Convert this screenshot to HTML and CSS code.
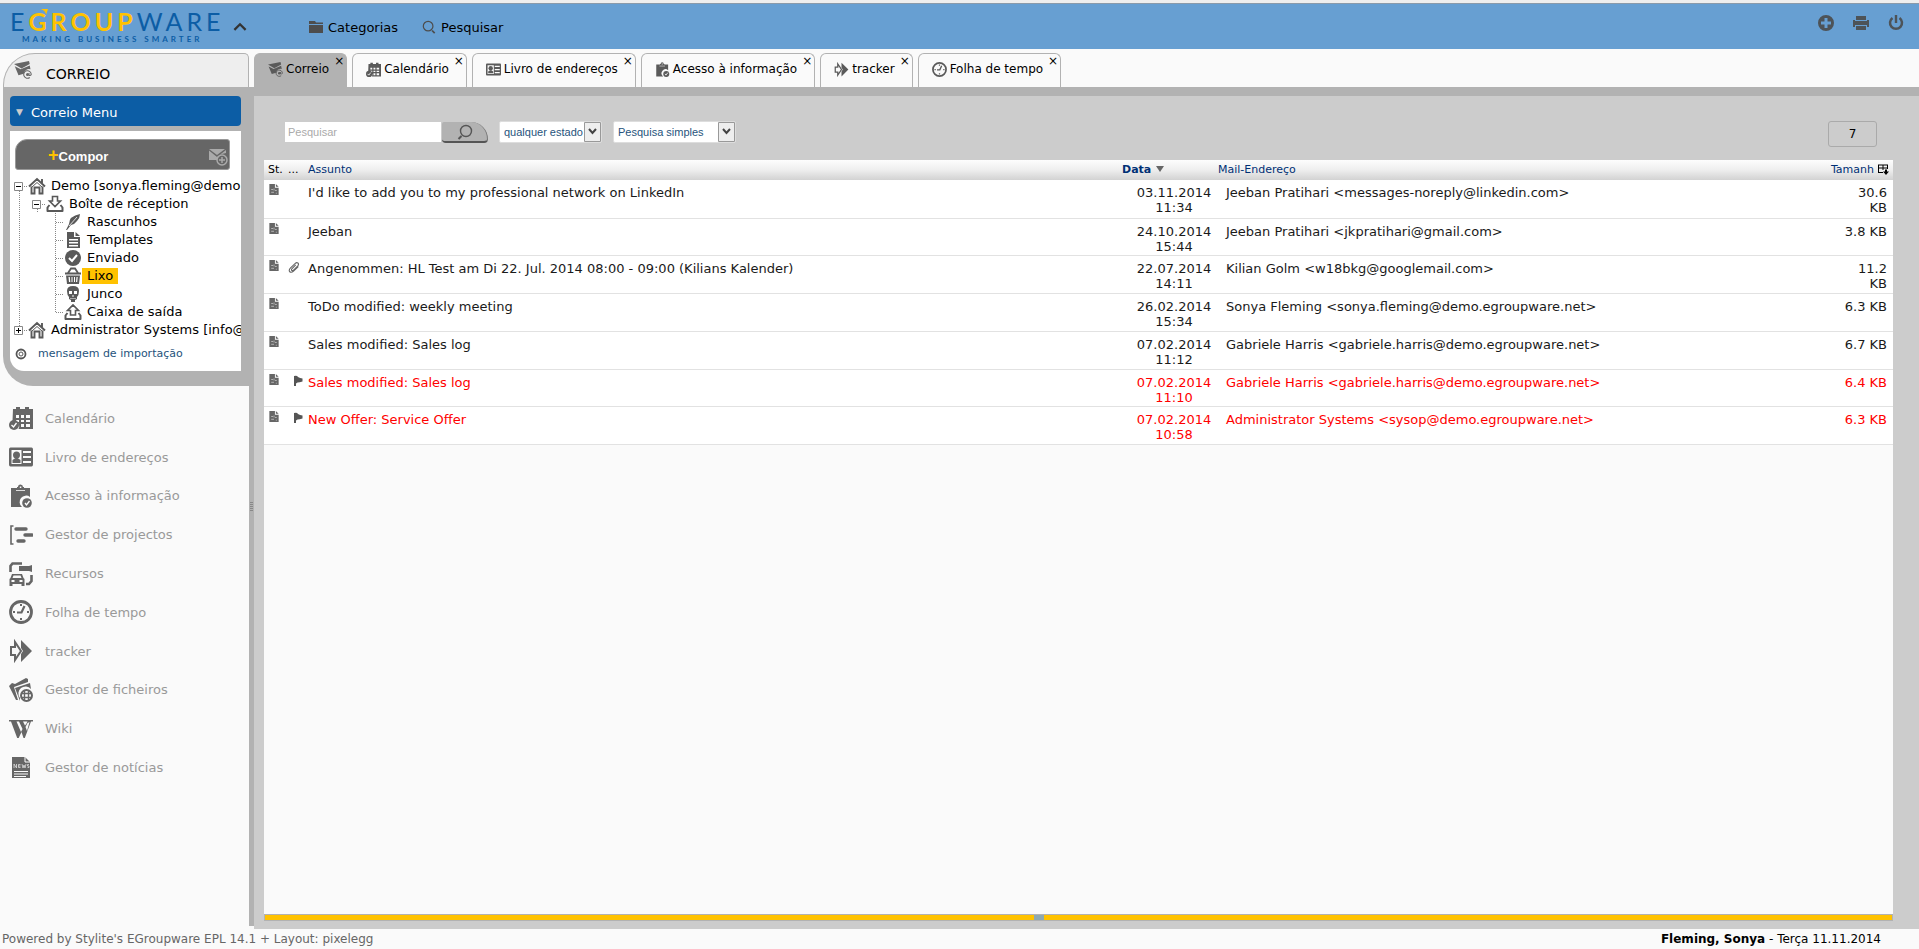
FILE: index.html
```html
<!DOCTYPE html>
<html lang="pt">
<head>
<meta charset="utf-8">
<title>EGroupware - Correio</title>
<link rel="stylesheet" href="styles.css">
</head>
<body>
<svg class="sprite" aria-hidden="true">
  <symbol id="i-mail" viewBox="0 0 24 24"><path d="M0 4 20 0l1 4-11 6zM1 7l8 4 12-5 1 5a7 7 0 0 0-9 6L6 19z"/><circle cx="18" cy="18" r="2"/><path d="M20 16v3q2 1 3-1a5 5 0 1 0-2 4" fill="none" stroke="currentColor" stroke-width="1.4"/></symbol>
  <symbol id="i-calendar" viewBox="0 0 24 24"><path fill-rule="evenodd" d="M4 3h3V1h4v2h5V1h4v2h4v20H9.500a5.500 5.500 0 0 0-6-8zM7 9v3h3V9zm5 0v3h3V9zm5 0v3h4V9zM7 14v2h3v-2zm5 0v2h3v-2zm5 0v2h4v-2zm-5 4v3h3v-3zm5 0v3h4v-3z"/><circle cx="5" cy="19" r="5"/><path d="m2.500 19 2 2 3-4" fill="none" stroke="#fff" stroke-width="1.300"/></symbol>
  <symbol id="i-contacts" viewBox="0 0 24 24"><path fill-rule="evenodd" d="M1.500 2.500h21q1.500 0 1.500 2v15q0 2-1.500 2h-21Q0 21.500 0 19.500v-15q0-2 1.500-2zM2.500 5v14h10V5zM14 6v2h8V6zm0 5v2h8v-2zm0 5v2h8v-2z"/><circle cx="7.500" cy="10" r="3.500"/><path d="M3.500 18v-3l3-2h2l3 2v3z"/></symbol>
  <symbol id="i-clip" viewBox="0 0 24 24"><path fill-rule="evenodd" d="M2 4h6V3h1a2.500 2.500 0 0 1 5 0h1v1h6v9a6 6 0 0 0-8 10H2zM10.800 2.500v1.500h1.500V2.500z"/><path d="M7 6.500h9" stroke="#ddd" stroke-width="1"/><circle cx="18" cy="19" r="4.800"/><path d="m16 19 1.500 2 3-4" fill="none" stroke="#fff" stroke-width="1.300"/></symbol>
  <symbol id="i-projects" viewBox="0 0 24 24"><path d="M4.500 3H2v18h2.500" fill="none" stroke="currentColor" stroke-width="1.600"/><path d="M7 6h10M16 12h7M9 18h6" stroke="currentColor" stroke-width="3.400" stroke-linecap="round"/></symbol>
  <symbol id="i-resources" viewBox="0 0 24 24"><path d="M1.500 10V4l2-2.500H13M17 22h3l2.500-3v-6" fill="none" stroke="currentColor" stroke-width="2.600"/><path fill-rule="evenodd" d="M10 4h10l3-1v7l-3-1H10zM3 12h10l1.500 4 1 1v7h-3v-2h-9v2h-3v-7l1-1zm1.500 1.500L3.500 16h9l-1-2.500zM2.500 18v2h3v-2zm8 0v2h3v-2z"/></symbol>
  <symbol id="i-clock" viewBox="0 0 24 24"><circle cx="12" cy="12" r="10.500" fill="none" stroke="currentColor" stroke-width="2.800"/><path d="m15.500 6-3 6.500H8" fill="none" stroke="currentColor" stroke-width="2.200"/><path d="M11 4h2v2h-2zM11 18h2v2h-2zM4 11h2v2H4zM18 11h2v2h-2z"/></symbol>
  <symbol id="i-tracker" viewBox="0 0 24 24"><path d="M2 8h4V3l6 9-6 9v-5H2z" fill="none" stroke="currentColor" stroke-width="2"/><path d="m12 1 11 11-11 11v-8l2-3-2-3z"/></symbol>
  <symbol id="i-files" viewBox="0 0 24 24"><path d="M0 8l3-3 3 1L17 0l2 1v3L5 9l4 13H7zM6 10l15-5 1 6a7 7 0 0 0-11 9v3z"/><circle cx="17.500" cy="17.500" r="5.500" fill="none" stroke="currentColor" stroke-width="2"/><path d="M15.500 12v11M19.500 12v11M12 15.500h11M12 19.500h11" stroke="currentColor" stroke-width="1.400"/></symbol>
  <symbol id="i-wiki" viewBox="0 0 24 24"><path d="M0 3h9v1.500H7.500L12 15l1.500-3-3.500-7.500H8.500V3H24v1.500h-2L15.800 21h-1.300L12.500 15 9.700 21H8.200L2 4.500H0zm14 1.500 2 4 1.500-2 1-2zm4.500 1.500-2 4 1.500 4L20.500 5z"/></symbol>
  <symbol id="i-news" viewBox="0 0 24 24"><path fill-rule="evenodd" d="M3 1h13l5 5v16H3zm2 14v1h14v-1zm0 2.500v1h14v-1zM5 20v1h12v-1z"/><path d="M16 1v5h5" stroke="#fff" fill="none"/><path d="M5 12V8l2.500 4V8M11.500 8.500H9.500v3h2M9.500 10h2M13 8l1 4 1-3 1 3 1-4M20 8.500h-1.500V10H20v1.500h-1.500" stroke="#ddd" stroke-width=".8" fill="none"/></symbol>
  <symbol id="i-home" viewBox="0 0 18 18"><path d="m1 9.500 8-7.500 8 7.500M3.500 9.500v7h3v-6h5v6h3v-7M14 6V2" fill="none" stroke="currentColor" stroke-width="1.900"/><path d="m4 10 5-4.500 5 4.500" fill="none" stroke="currentColor"/></symbol>
  <symbol id="i-inbox" viewBox="0 0 18 18"><path d="M6.500 1.500h5V6h3L9 11.500 3.500 6h3z" fill="none" stroke="currentColor" stroke-width="1.600"/><path d="M3.500 10 1.500 12.500v3.500h15v-3.500L14.500 10" fill="none" stroke="currentColor" stroke-width="2" stroke-linejoin="round"/></symbol>
  <symbol id="i-outbox" viewBox="0 0 18 18"><path d="M6.500 12h5V7.500h3L9 2 3.500 7.500h3z" fill="none" stroke="currentColor" stroke-width="1.600"/><path d="M3.500 10 1.500 12.500v3.500h15v-3.500L14.500 10" fill="none" stroke="currentColor" stroke-width="2" stroke-linejoin="round"/></symbol>
  <symbol id="i-feather" viewBox="0 0 18 18"><path d="M16 1q0 4-3 7-2 3-6 4l-4 5H2l3-6Q5 3 16 1z"/><path d="m5 13 8-9" stroke="#fff" stroke-width=".8"/></symbol>
  <symbol id="i-doc" viewBox="0 0 18 18"><path fill-rule="evenodd" d="M3 1h7v5h6v11H3zm2 7v1.500h9V8zm0 3v1.500h9V11zm0 3v1.500h9V14z"/><path d="M11.500 1 16 5h-4.500z"/></symbol>
  <symbol id="i-sent" viewBox="0 0 18 18"><circle cx="9" cy="9" r="8"/><path d="m5 9 3 3 5-6" fill="none" stroke="#fff" stroke-width="2"/></symbol>
  <symbol id="i-trash" viewBox="0 0 18 18"><path d="m4 6 3-4.500h4L14 6M1 6.500h16" fill="none" stroke="currentColor" stroke-width="1.800"/><path fill-rule="evenodd" d="M2 8.500h14l-1 8.500H3zm2.500 1.500.5 5h1.300l-.5-5zm3 0v5h1v-5zm2.500 0v5h1v-5zm2.500 0-.5 5h1.200l.5-5z"/></symbol>
  <symbol id="i-junk" viewBox="0 0 18 18"><path fill-rule="evenodd" d="M9 1q6 0 6 5 0 4-2 6v2l-2 1v2H7v-2l-2-1v-2Q3 10 3 6q0-5 6-5zM5 6v3h3V6zm5 0v3h3V6zm-1.500 4v2h1v-2zM6.500 13v1h1v-1zm2 0v1h1v-1zm2 0v1h1v-1z"/></symbol>
  <symbol id="i-read" viewBox="0 0 12 14"><path d="M1 1h6v4h4v8H1zM8 1l3 3H8z"/><path d="M3 7h2M3 10h3M7 8h2M8 11h1M6 6v2" stroke="#bbb" stroke-width="1"/></symbol>
  <symbol id="i-attach" viewBox="0 0 14 14"><path d="M9 4 4.500 8.500q-1 1.500 0 2 1 .5 2-.5L11.500 5q1.500-2 0-3.200-1.500-1-3 .4L3 7.500q-2.500 2.500-1 4.500 2 1.500 4.500-.8L12 6" fill="none" stroke="currentColor" stroke-width="1.300"/></symbol>
  <symbol id="i-flag" viewBox="0 0 10 12"><path d="M1 1q3-1 4 1 2 1 4.500 1.500v3q-3 1-5 1l-1.500 1V11H1z"/></symbol>
  <symbol id="i-magnify" viewBox="0 0 16 16"><circle cx="7" cy="7" r="5.500" fill="none" stroke="currentColor" stroke-width="1.400"/><path d="m11.500 12 3 3" stroke="currentColor" stroke-width="2"/></symbol>
  <symbol id="m" viewBox="0 0 18 18"><path d="M9.500 0v18" stroke="#888" stroke-dasharray="1 1"/></symbol>
  <symbol id="m-tee" viewBox="0 0 18 18"><path d="M9.500 0v18M10 9.500h8" stroke="#888" stroke-dasharray="1 1"/></symbol>
  <symbol id="m-end" viewBox="0 0 18 18"><path d="M9.500 0v10M10 9.500h8" stroke="#888" stroke-dasharray="1 1"/></symbol>
  <symbol id="m-open" viewBox="0 0 18 18"><path d="M9.500 14v4M14 9.500h4" stroke="#888" stroke-dasharray="1 1"/><path d="M4.500 5.500h8v8h-8z" fill="#fff" stroke="#888"/><path d="M6 9.500h5" stroke="#000"/></symbol>
  <symbol id="m-closed" viewBox="0 0 18 18"><path d="M9.500 0v5M14 9.500h4" stroke="#888" stroke-dasharray="1 1"/><path d="M4.500 5.500h8v8h-8z" fill="#fff" stroke="#888"/><path d="M6 9.500h5M8.500 7v5" stroke="#000"/></symbol>
</svg>

<header class="topbar">
  <a class="logo" href="#" aria-label="EGroupware">
    <span class="logo-name">E<b>GROUP</b>WARE</span>
    <span class="logo-claim">MAKING BUSINESS SMARTER</span>
    <svg class="logo-arrow" viewBox="0 0 8 6"><path d="M1 0h7L6 6q0-4-5-6z"/></svg>
  </a>
  <button class="fold" aria-label="Recolher"><svg viewBox="0 0 12 8"><path d="m1 7 5-5 5 5" fill="none" stroke="currentColor" stroke-width="2"/></svg></button>
  <nav class="topmenu">
    <a href="#"><svg viewBox="0 0 14 14"><path d="M0 1h6l1 1.500h7V4H0zM0 5h14v8H0z"/></svg>Categorias</a>
    <a href="#"><svg viewBox="0 0 16 16"><use href="#i-magnify"/></svg>Pesquisar</a>
  </nav>
  <div class="topicons">
    <button aria-label="Adicionar"><svg viewBox="0 0 16 16"><path fill-rule="evenodd" d="M8 0a8 8 0 1 1 0 16A8 8 0 0 1 8 0zM6.500 3v3.500H3v3h3.500V13h3V9.500H13v-3H9.500V3z"/></svg></button>
    <button aria-label="Imprimir"><svg viewBox="0 0 16 16"><path d="M3 1h10v4H3zM0 5h2v1h12V5h2v7h-2v-2H2v2H0zM3 11h10v4H3z"/></svg></button>
    <button aria-label="Sair"><svg viewBox="0 0 16 16"><path d="M4.500 3a6 6 0 1 0 7 0" fill="none" stroke="currentColor" stroke-width="2.500"/><path d="M6.800 0h2.400v8H6.800z"/></svg></button>
  </div>
</header>

<main class="main">
  <aside class="sidebar">
    <h1 class="side-head"><svg><use href="#i-mail"/></svg>CORREIO</h1>
    <section class="side-box">
      <button class="menu-title"><span>▼</span>Correio Menu</button>
      <div class="panel">
        <button class="compose"><span><b>+</b>Compor</span><svg viewBox="0 0 20 20"><path d="M1 3l8 6 8-6zM1 4.500V14h8q0-5 5-6l4-1V4l-9 7z"/><circle cx="14" cy="14" r="5" fill="#666" stroke="currentColor" stroke-width="1.500"/><path d="M14 11v6M11 14h6" stroke="currentColor" stroke-width="1.500"/></svg></button>
        <ul class="tree">
          <li><svg><use href="#m-open"/></svg><svg><use href="#i-home"/></svg><a href="#">Demo [sonya.fleming@demo.e</a></li>
          <li><svg><use href="#m"/></svg><svg><use href="#m-open"/></svg><svg><use href="#i-inbox"/></svg><a href="#">Boîte de réception</a></li>
          <li><svg><use href="#m"/></svg><svg></svg><svg><use href="#m-tee"/></svg><svg><use href="#i-feather"/></svg><a href="#">Rascunhos</a></li>
          <li><svg><use href="#m"/></svg><svg></svg><svg><use href="#m-tee"/></svg><svg><use href="#i-doc"/></svg><a href="#">Templates</a></li>
          <li><svg><use href="#m"/></svg><svg></svg><svg><use href="#m-tee"/></svg><svg><use href="#i-sent"/></svg><a href="#">Enviado</a></li>
          <li><svg><use href="#m"/></svg><svg></svg><svg><use href="#m-tee"/></svg><svg><use href="#i-trash"/></svg><a href="#" class="selected">Lixo</a></li>
          <li><svg><use href="#m"/></svg><svg></svg><svg><use href="#m-tee"/></svg><svg><use href="#i-junk"/></svg><a href="#">Junco</a></li>
          <li><svg><use href="#m"/></svg><svg></svg><svg><use href="#m-end"/></svg><svg><use href="#i-outbox"/></svg><a href="#">Caixa de saída</a></li>
          <li><svg><use href="#m-closed"/></svg><svg><use href="#i-home"/></svg><a href="#">Administrator Systems [info@d</a></li>
        </ul>
        <a class="import" href="#"><svg viewBox="0 0 12 12"><circle cx="6" cy="6" r="4.500" fill="none" stroke="currentColor" stroke-width="1.800"/><circle cx="6" cy="6" r="2" fill="none" stroke="currentColor"/></svg>mensagem de importação</a>
      </div>
    </section>
    <nav class="apps">
      <a href="#"><svg><use href="#i-calendar"/></svg>Calendário</a>
      <a href="#"><svg><use href="#i-contacts"/></svg>Livro de endereços</a>
      <a href="#"><svg><use href="#i-clip"/></svg>Acesso à informação</a>
      <a href="#"><svg><use href="#i-projects"/></svg>Gestor de projectos</a>
      <a href="#"><svg><use href="#i-resources"/></svg>Recursos</a>
      <a href="#"><svg><use href="#i-clock"/></svg>Folha de tempo</a>
      <a href="#"><svg><use href="#i-tracker"/></svg>tracker</a>
      <a href="#"><svg><use href="#i-files"/></svg>Gestor de ficheiros</a>
      <a href="#"><svg><use href="#i-wiki"/></svg>Wiki</a>
      <a href="#"><svg><use href="#i-news"/></svg>Gestor de notícias</a>
    </nav>
  </aside>
  <div class="splitter"><i></i></div>
  <div class="work">
    <nav class="tabs">
      <div class="tab active"><svg><use href="#i-mail"/></svg><a href="#">Correio</a><button aria-label="Fechar Correio">×</button></div>
      <div class="tab"><svg><use href="#i-calendar"/></svg><a href="#">Calendário</a><button aria-label="Fechar Calendário">×</button></div>
      <div class="tab"><svg><use href="#i-contacts"/></svg><a href="#">Livro de endereços</a><button aria-label="Fechar Livro de endereços">×</button></div>
      <div class="tab"><svg><use href="#i-clip"/></svg><a href="#">Acesso à informação</a><button aria-label="Fechar Acesso à informação">×</button></div>
      <div class="tab"><svg><use href="#i-tracker"/></svg><a href="#">tracker</a><button aria-label="Fechar tracker">×</button></div>
      <div class="tab"><svg><use href="#i-clock"/></svg><a href="#">Folha de tempo</a><button aria-label="Fechar Folha de tempo">×</button></div>
    </nav>
    <section class="content">
      <form class="filters">
        <input class="search" type="text" placeholder="Pesquisar" aria-label="Pesquisar">
        <button class="go" type="button" aria-label="Procurar"><svg viewBox="0 0 16 16"><use href="#i-magnify"/></svg></button>
        <label class="pick state"><select aria-label="Estado"><option>qualquer estado</option></select><svg viewBox="0 0 17 20"><path d="M.5.5h16v19H.5z" fill="#eee" stroke="#999"/><path d="m5 7 3.500 4L12 7" fill="none" stroke="#444" stroke-width="2"/></svg></label>
        <label class="pick mode"><select aria-label="Tipo de pesquisa"><option>Pesquisa simples</option></select><svg viewBox="0 0 17 20"><path d="M.5.5h16v19H.5z" fill="#eee" stroke="#999"/><path d="m5 7 3.500 4L12 7" fill="none" stroke="#444" stroke-width="2"/></svg></label>
        <output class="count">7</output>
      </form>
      <div class="grid">
        <table>
          <colgroup><col class="c-st"><col class="c-fl"><col><col class="c-date"><col class="c-mail"><col class="c-size"></colgroup>
          <thead><tr><th>St.</th><th>...</th><th><a href="#">Assunto</a></th><th><a class="sorted" href="#">Data<svg viewBox="0 0 8 6"><path d="M0 0h8L4 6z"/></svg></a></th><th><a href="#">Mail-Endereço</a></th><th><div class="size-head"><a href="#">Tamanh</a><button aria-label="Colunas"><svg viewBox="0 0 11 11"><path d="M0 1h10M.5 1v7.500M5 1v5M9.500 1v4M0 4h10M0 8.500h5" stroke="#000" fill="none"/><path d="M5 7.500h6L8 11zM7 5.500h2v2H7z"/></svg></button></div></th></tr></thead>
          <tbody>
            <tr><td><svg><use href="#i-read"/></svg></td><td></td><td>I'd like to add you to my professional network on LinkedIn</td><td>03.11.2014<br>11:34</td><td>Jeeban Pratihari &lt;messages-noreply@linkedin.com&gt;</td><td>30.6 KB</td></tr>
            <tr><td><svg><use href="#i-read"/></svg></td><td></td><td>Jeeban</td><td>24.10.2014<br>15:44</td><td>Jeeban Pratihari &lt;jkpratihari@gmail.com&gt;</td><td>3.8 KB</td></tr>
            <tr><td><svg><use href="#i-read"/></svg></td><td><svg><use href="#i-attach"/></svg></td><td>Angenommen: HL Test am Di 22. Jul. 2014 08:00 - 09:00 (Kilians Kalender)</td><td>22.07.2014<br>14:11</td><td>Kilian Golm &lt;w18bkg@googlemail.com&gt;</td><td>11.2 KB</td></tr>
            <tr><td><svg><use href="#i-read"/></svg></td><td></td><td>ToDo modified: weekly meeting</td><td>26.02.2014<br>15:34</td><td>Sonya Fleming &lt;sonya.fleming@demo.egroupware.net&gt;</td><td>6.3 KB</td></tr>
            <tr><td><svg><use href="#i-read"/></svg></td><td></td><td>Sales modified: Sales log</td><td>07.02.2014<br>11:12</td><td>Gabriele Harris &lt;gabriele.harris@demo.egroupware.net&gt;</td><td>6.7 KB</td></tr>
            <tr class="flagged"><td><svg><use href="#i-read"/></svg></td><td class="flag"><svg><use href="#i-flag"/></svg></td><td>Sales modified: Sales log</td><td>07.02.2014<br>11:10</td><td>Gabriele Harris &lt;gabriele.harris@demo.egroupware.net&gt;</td><td>6.4 KB</td></tr>
            <tr class="flagged"><td><svg><use href="#i-read"/></svg></td><td class="flag"><svg><use href="#i-flag"/></svg></td><td>New Offer: Service Offer</td><td>07.02.2014<br>10:58</td><td>Administrator Systems &lt;sysop@demo.egroupware.net&gt;</td><td>6.3 KB</td></tr>
          </tbody>
        </table>
      </div>
      <div class="preview-bar"><i></i></div>
    </section>
  </div>
</main>
<footer class="footer">
  <span>Powered by Stylite's EGroupware EPL 14.1 + Layout: pixelegg</span>
  <span class="user"><b>Fleming, Sonya</b> - Terça 11.11.2014</span>
</footer>
</body>
</html>
```
FILE: styles.css
```css
* { box-sizing: border-box; }
body {
  margin: 0;
  min-height: 100vh;
  display: flex;
  flex-direction: column;
  background: #fafafa;
  color: #000;
  font: 13px/15px Verdana, "DejaVu Sans", sans-serif;
}
a { color: inherit; text-decoration: none; }
button { border: 0; padding: 0; background: none; font: inherit; color: inherit; cursor: pointer; }
svg { fill: currentColor; flex: none; }
.sprite { position: absolute; width: 0; height: 0; }

/* top bar */
.topbar {
  display: flex;
  align-items: center;
  height: 49px;
  border-top: 3px solid #eee;
  background: #679fd2;
  box-shadow: inset 0 1px #8a9aaa;
  padding: 0 15px 0 10px;
}
.logo { position: relative; display: flex; flex-direction: column; width: 223px; color: #0c5da5; font-family: Lato, sans-serif; }
.logo-name { font-size: 25px; line-height: 25px; letter-spacing: 4px; white-space: nowrap; }
.logo-name b { color: #ffc200; }
.logo-claim { font-size: 8px; line-height: 10px; letter-spacing: 3px; font-weight: bold; padding-left: 12px; white-space: nowrap; }
.logo-arrow { position: absolute; left: 30px; top: 0; width: 8px; height: 6px; fill: #ffc200; }
.fold svg { display: block; width: 14px; height: 9px; color: #333; }
.topmenu { display: flex; gap: 24px; margin-left: 62px; padding-top: 2px; }
.topmenu a { display: flex; align-items: center; gap: 5px; }
.topmenu svg { width: 14px; height: 14px; color: #4d4d4d; }
.topicons { display: flex; gap: 19px; margin-left: auto; padding-bottom: 6px; }
.topicons svg { display: block; width: 16px; height: 16px; color: #4d5358; }

.main { flex: 1; display: flex; }

/* sidebar */
.sidebar { width: 249px; flex: none; padding: 4px 0 0 3px; }
.side-head {
  display: flex;
  align-items: center;
  gap: 14px;
  height: 34px;
  margin: 0;
  padding: 7px 0 0 10px;
  border: 1px solid #b2b2b2;
  border-bottom: 0;
  border-radius: 32px 5px 0 0;
  background: #eee;
  font-size: 14px;
  font-weight: normal;
}
.side-head svg { width: 18px; height: 18px; color: #666; margin-bottom: 9px; }
.side-box { background: #b2b2b2; border-radius: 0 0 0 30px; padding: 9px 8px 15px 7px; }
.menu-title {
  display: flex;
  align-items: center;
  gap: 8px;
  width: 100%;
  height: 30px;
  padding: 2px 0 0 6px;
  border-radius: 4px;
  background: #0c5da5;
  color: #fff;
}
.menu-title span { font-size: 9px; color: #ccc; }
.panel { margin-top: 5px; padding: 8px 0; height: 240px; background: #fff; border-radius: 0 0 0 14px; overflow: hidden; }
.compose {
  display: flex;
  align-items: center;
  justify-content: space-between;
  width: 215px;
  height: 31px;
  margin-left: 5px;
  padding: 2px 1px 0 32px;
  border: 1px solid #999;
  border-radius: 12px 3px 3px 3px;
  background: #666;
  color: #fff;
  font: bold 13px/15px "Liberation Sans", sans-serif;
}
.compose b { color: #ffc200; font-size: 18px; }
.compose svg { width: 20px; height: 20px; color: #aaa; }
.tree { list-style: none; margin: 7px 0 0; padding: 0; white-space: nowrap; }
.tree li { display: flex; height: 18px; align-items: center; }
.tree svg { width: 18px; height: 18px; color: #595959; }
.tree a { padding: 0 5px; line-height: 16px; }
.tree .selected { background: #ffc200; }
.import { display: flex; align-items: center; gap: 11px; margin-top: 7px; padding-left: 5px; font-size: 11px; color: #26537c; }
.import svg { width: 12px; height: 12px; color: #555; }
.apps { display: grid; grid-auto-rows: 1fr; height: 388px; margin-top: 13px; color: #999; }
.apps a { display: flex; align-items: center; gap: 12px; padding-left: 6px; }
.apps svg { width: 24px; height: 24px; color: #666; }

.splitter { width: 5px; flex: none; margin: 38px 0 3px; background: #b2b2b2; display: flex; align-items: center; justify-content: center; }
.splitter i { width: 3px; height: 10px; background: repeating-linear-gradient(#888 0 1px, #b2b2b2 1px 2px); }

/* tabs */
.work { flex: 1; min-width: 0; display: flex; flex-direction: column; }
.tabs { display: flex; gap: 5px; height: 47px; padding-top: 4px; border-bottom: 9px solid #b2b2b2; }
.tab {
  display: flex;
  align-items: flex-start;
  padding: 8px 4px 0 13px;
  border: 1px solid #b2b2b2;
  border-bottom: 0;
  border-radius: 6px 6px 0 0;
  background: #fafafa;
  font-size: 12px;
  white-space: nowrap;
}
.tab.active { background: #b2b2b2; }
.tab svg { width: 15px; height: 15px; color: #5a5a5a; }
.tab a { margin-left: 3px; }
.tab button { margin: -7px 0 0 5px; line-height: 12px; width: 8px; }

/* content */
.content { flex: 1; display: flex; flex-direction: column; background: #ccc; padding: 25px 26px 8px 10px; }
.filters { display: flex; align-items: flex-start; height: 26px; margin: 0 16px 13px 21px; font-family: "Liberation Sans", sans-serif; font-size: 11px; }
.search { width: 156px; height: 20px; margin-top: 1px; border: 0; padding: 0 3px; background: #fff; font: inherit; color: #26537c; }
.search::placeholder { color: #aaa; opacity: 1; }
.go { width: 46px; height: 21px; margin: 1px 0 0 1px; border-bottom: 2px solid #555; border-right: 1px solid #777; border-radius: 2px 18px 4px 4px; background: #b2b2b2; }
.go svg { width: 16px; height: 16px; color: #555; display: block; margin: 0 auto; transform: scaleX(-1); }
.pick { display: flex; position: relative; height: 22px; border: 1px solid #ddd; border-radius: 2px; background: #fff; margin-left: 11px; }
.pick select { appearance: none; width: 100%; border: 0; background: none; padding: 0 4px; font: inherit; color: #26537c; }
.pick svg { position: absolute; right: 0; top: 0; width: 17px; height: 20px; pointer-events: none; }
.state { width: 103px; }
.mode { width: 123px; }
.count { width: 49px; height: 26px; margin-left: auto; border: 1px solid #aaa; border-radius: 3px; text-align: center; font: 12px/24px "DejaVu Sans", sans-serif; }

.grid { flex: 1; background: #fafafa; }
table { width: 100%; table-layout: fixed; border-collapse: collapse; }
.c-st { width: 22px; }
.c-fl { width: 18px; }
.c-date { width: 96px; }
.c-mail { width: 608px; }
.c-size { width: 71px; }
th { height: 20px; padding: 0 0 2px; text-align: left; font-weight: normal; font-size: 11px; white-space: nowrap; }
th:first-child { padding-left: 4px; }
th:nth-child(2) { padding-left: 2px; }
th:nth-child(n+3) { padding-left: 4px; }
thead tr { background: linear-gradient(#fdfdfd, #eee 50%, #d2d2d2); }
th a { color: #003075; }
.sorted { font-weight: bold; }
.sorted svg { width: 8px; height: 6px; margin-left: 5px; color: #666; vertical-align: 1px; }
.size-head { display: flex; align-items: center; justify-content: flex-end; gap: 4px; padding-right: 4px; }
.size-head svg { display: block; width: 11px; height: 11px; }
tbody tr { background: #fff; border-bottom: 1px solid #e2e2e2; color: #1a1a1a; }
td { padding: 5px 4px 2px; height: 38px; vertical-align: top; }
tr:nth-child(4n+2) td { padding-bottom: 1px; height: 37px; }
td:first-child { padding: 3px 0 0 4px; }
td:nth-child(2) { padding: 5px 0 0 2px; }
td svg { display: block; width: 12px; height: 13px; color: #666; }
td.flag svg { width: 10px; height: 12px; margin-left: 5px; color: #555; }
td:nth-child(4) { text-align: center; padding-left: 16px; padding-right: 0; }
td:nth-child(5) { padding-left: 12px; }
td:nth-child(6) { text-align: right; padding: 5px 6px 2px 18px; }
.flagged td:nth-child(n+3) { color: #f00; }
.preview-bar { height: 7px; border: 1px solid #b2b2b2; background: #ffc200; display: flex; justify-content: center; }
.preview-bar i { width: 10px; height: 5px; background: #8fa9b0; margin-right: 80px; }

.footer { display: flex; justify-content: space-between; height: 20px; padding: 3px 38px 0 2px; font-size: 12px; color: #666; }
.user { color: #000; }
```
